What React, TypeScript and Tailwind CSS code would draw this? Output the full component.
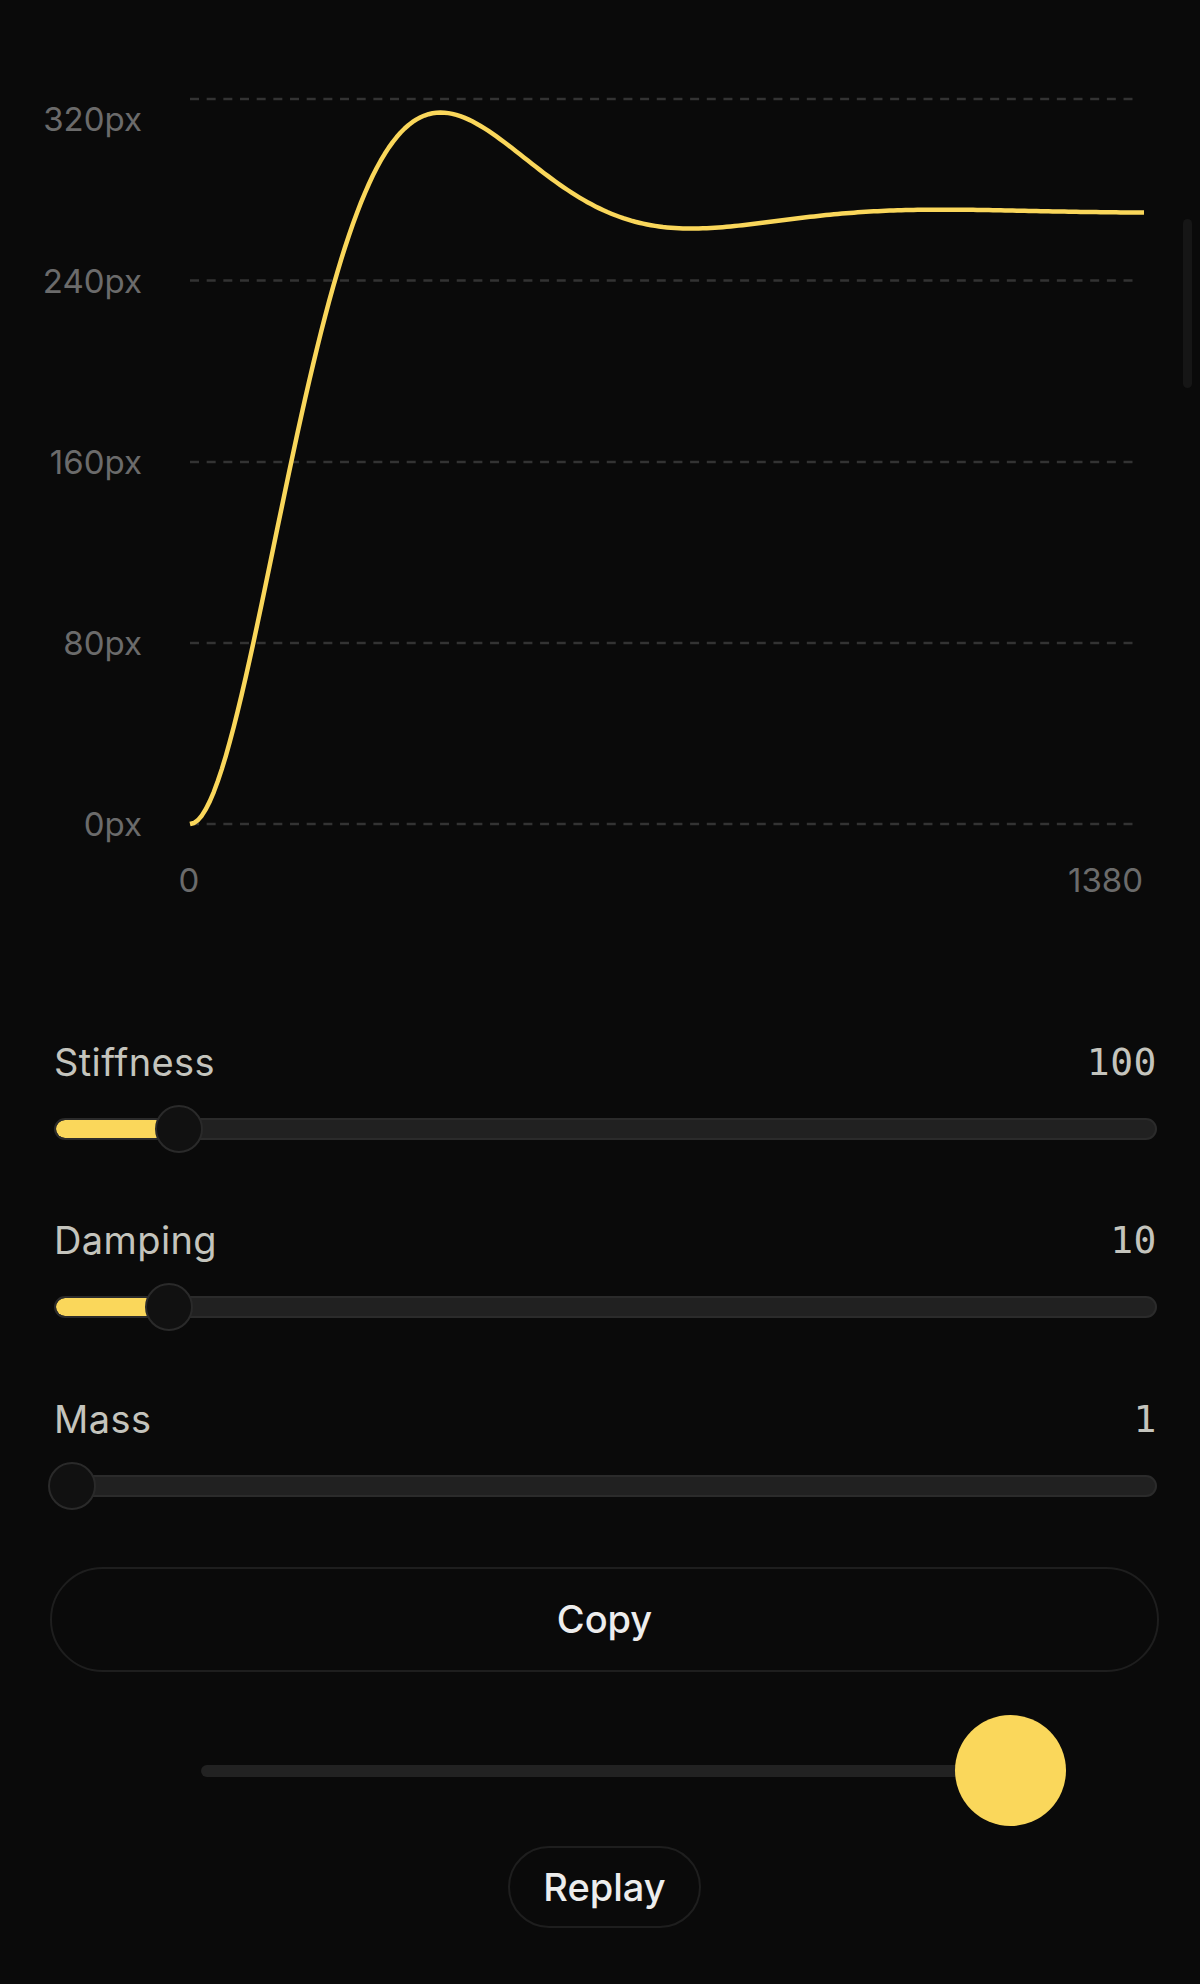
import React from "react";

const YELLOW = "#fad75b";

// spring: stiffness 100, damping 10, mass 1 — drawn over 1380ms
const buildPath = () => {
  const k = 100, c = 10, m = 1, target = 270;
  const w0 = Math.sqrt(k / m);
  const zeta = c / (2 * Math.sqrt(k * m));
  const wd = w0 * Math.sqrt(1 - zeta * zeta);
  const pts: string[] = [];
  const N = 240;
  for (let i = 0; i <= N; i++) {
    const t = (i / N) * 1.38;
    const v = target * (1 - Math.exp(-zeta * w0 * t) * (Math.cos(wd * t) + (zeta * w0 / wd) * Math.sin(wd * t)));
    const x = 190 + (t / 1.38) * 954;
    const y = 824 - v * (725 / 320);
    pts.push(`${i === 0 ? "M" : "L"}${x.toFixed(2)} ${y.toFixed(2)}`);
  }
  return pts.join(" ");
};

const grid = [
  { y: 99, label: "320px", ty: 131 },
  { y: 280.5, label: "240px", ty: 292.5 },
  { y: 462, label: "160px", ty: 474 },
  { y: 643, label: "80px", ty: 655 },
  { y: 824, label: "0px", ty: 836 },
];

const Chart = () => (
  <svg width={1200} height={930} viewBox="0 0 1200 930" className="block">
    {grid.map((g) => (
      <g key={g.label}>
        <line x1={190} x2={1136} y1={g.y} y2={g.y} stroke="#333333" strokeWidth={2.5} strokeDasharray="9 7.67" />
        <text x={142} y={g.ty} textAnchor="end" fill="#6b6b6b" fontSize={33} fontFamily="Inter, sans-serif">
          {g.label}
        </text>
      </g>
    ))}
    <text x={189} y={892} textAnchor="middle" fill="#6b6b6b" fontSize={33} fontFamily="Inter, sans-serif">0</text>
    <text x={1143} y={892} textAnchor="end" fill="#6b6b6b" fontSize={33} fontFamily="Inter, sans-serif">1380</text>
    <path d={buildPath()} fill="none" stroke={YELLOW} strokeWidth={4.5} strokeLinejoin="round" />
  </svg>
);

type SliderProps = { label: string; value: string; frac: number };

const Slider = ({ label, value, frac }: SliderProps) => {
  const center = 18 + frac * 1067;
  return (
    <div className="flex flex-col">
      <div className="flex items-center justify-between h-[44px] leading-[44px] text-[#c4c4bd]">
        <span className="font-[Inter] text-[38px] tracking-[0.4px]">{label}</span>
        <span className="font-['DejaVu_Sans_Mono',monospace] text-[38px] tracking-[0.5px]">{value}</span>
      </div>
      <div className="relative mt-[21px] h-[48px] flex items-center">
        <div className="relative w-full h-[22px] rounded-full border-2 border-[#2b2b2b] bg-[#212121] overflow-hidden">
          <div className="absolute inset-y-0 left-0 rounded-l-full bg-[#fad75b]" style={{ width: center }} />
        </div>
        <div
          className="absolute top-0 w-[48px] h-[48px] rounded-full bg-[#111111] border-2 border-[#2a2a2a]"
          style={{ left: center - 24 }}
        />
      </div>
    </div>
  );
};

export default function App() {
  return (
    <div className="relative w-full min-h-[1984px] bg-[#0a0a0a] overflow-hidden font-[Inter]">
      <Chart />

      <div className="mt-[109.5px] pl-[54px] pr-[43px] flex flex-col gap-[65.5px]">
        <Slider label="Stiffness" value="100" frac={0.1} />
        <Slider label="Damping" value="10" frac={0.091} />
        <Slider label="Mass" value="1" frac={0} />
      </div>

      <div className="pl-[50px] pr-[41px] mt-[57.5px]">
        <button className="w-full h-[105px] rounded-full border-2 border-[#1e1e1e] text-[38px] font-medium text-[#ededed]">
          Copy
        </button>
      </div>

      <div className="mt-[43px] h-[111px] flex items-center justify-center">
        <div className="relative w-[798px] h-[12px] rounded-full bg-[#222222]">
          <div className="absolute left-[754px] top-[-49.5px] w-[111px] h-[111px] rounded-full bg-[#fad75b]" />
        </div>
      </div>

      <div className="pl-[50px] pr-[41px] mt-[20px] flex justify-center">
        <button className="w-[193px] h-[82px] rounded-full border-2 border-[#1e1e1e] text-[38px] font-medium text-[#ededed]">
          Replay
        </button>
      </div>

      <div className="absolute left-[1183px] top-[219px] w-[9px] h-[169px] rounded-full bg-[#161616]" />
    </div>
  );
}
